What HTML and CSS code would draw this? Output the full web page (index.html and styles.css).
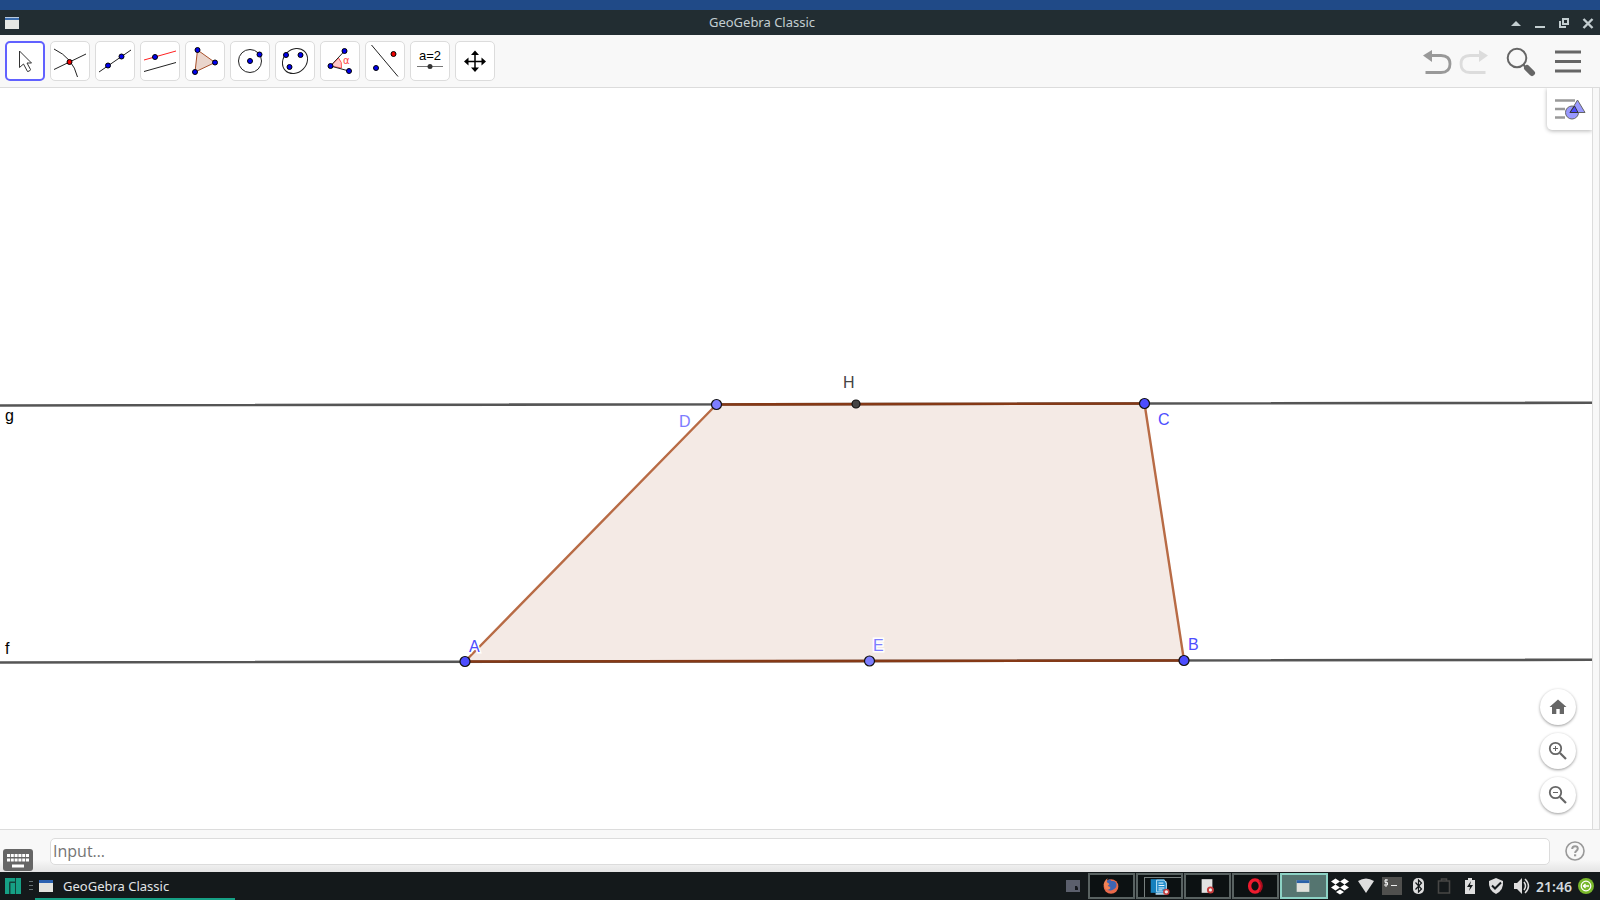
FILE: index.html
```html
<!DOCTYPE html>
<html lang="en">
<head>
<meta charset="utf-8">
<title>GeoGebra Classic</title>
<link rel="stylesheet" href="styles.css">
</head>
<body>
<div class="desktop-strip"></div>
<header class="titlebar">
  <svg class="app-icon" width="16" height="14" viewBox="0 0 16 14"><rect x="1" y="1" width="14" height="12" fill="#e6e8e4"/><rect x="1" y="1" width="14" height="3" fill="#3c6eb0"/><path d="M1 1.5h14" stroke="#b9cbe2"/></svg>
  <h1 class="title">GeoGebra Classic</h1>
  <div class="window-controls">
    <button class="win-btn" aria-label="Keep above"><svg width="24" height="24" viewBox="0 0 24 24"><path d="M7 15l5-5 5 5z" fill="#c3ced1"/></svg></button>
    <button class="win-btn" aria-label="Minimize"><svg width="24" height="24" viewBox="0 0 24 24"><path d="M7 16h10" stroke="#c3ced1" stroke-width="2"/></svg></button>
    <button class="win-btn" aria-label="Restore"><svg width="24" height="24" viewBox="0 0 24 24"><path d="M11 8h5v5h-5zM8 10v6h6" fill="none" stroke="#c3ced1" stroke-width="2"/></svg></button>
    <button class="win-btn" aria-label="Close"><svg width="24" height="24" viewBox="0 0 24 24"><path d="M7.500 8l9 9M16.500 8l-9 9" stroke="#c3ced1" stroke-width="2.400"/></svg></button>
  </div>
</header>

<nav class="toolbar">
  <div class="tools">
    <button class="tool tool-active" aria-label="Move"><svg viewBox="0 0 40 40"><path d="M14.500 10v16.500l4-3.500 4 7.500q2.500 0 3-2l-3.500-6.500h4.500z" fill="#fff" stroke="#333"/></svg></button>
    <button class="tool" aria-label="Intersect"><svg viewBox="0 0 40 40"><path d="M4 8q19 9 23.500 28M4 28.500L36 13" class="ink"/><circle cx="19.500" cy="21" r="2.500" class="pt-red"/></svg></button>
    <button class="tool" aria-label="Line"><svg viewBox="0 0 40 40"><path d="M4 31L36 9" class="ink"/><circle cx="13" cy="24.500" r="2.500" class="pt"/><circle cx="26.500" cy="15.500" r="2.500" class="pt"/></svg></button>
    <button class="tool" aria-label="Parallel line"><svg viewBox="0 0 40 40"><path d="M4 19L36 10" fill="none" stroke="#f22"/><path d="M4 30.500L36 21.500" class="ink"/><circle cx="15" cy="16" r="2.500" class="pt"/></svg></button>
    <button class="tool" aria-label="Polygon"><svg viewBox="0 0 40 40"><path d="M12.500 9L30 21.500 10 31z" fill="#ead5cc" stroke="#a8502a"/><circle cx="12.500" cy="9" r="2.500" class="pt"/><circle cx="30" cy="21.500" r="2.500" class="pt"/><circle cx="10" cy="31" r="2.500" class="pt"/></svg></button>
    <button class="tool" aria-label="Circle with center"><svg viewBox="0 0 40 40"><circle cx="20" cy="20" r="11.500" class="ink"/><circle cx="20" cy="20" r="2.500" class="pt"/><circle cx="29.500" cy="13.500" r="2.500" class="pt"/></svg></button>
    <button class="tool" aria-label="Ellipse"><svg viewBox="0 0 40 40"><ellipse cx="20" cy="20" rx="13.500" ry="11.500" transform="rotate(-45 20 20)" class="ink"/><circle cx="11" cy="14" r="2.500" class="pt"/><circle cx="25.500" cy="14" r="2.500" class="pt"/><circle cx="14.500" cy="26" r="2.500" class="pt"/></svg></button>
    <button class="tool" aria-label="Angle"><svg viewBox="0 0 40 40"><path d="M10.500 25l8-8q4 4 3 10z" fill="#ffc8c8" stroke="#f55"/><path d="M24.500 10l-14 15 18.500 5" class="ink"/><circle cx="24.500" cy="10" r="2.500" class="pt"/><circle cx="10.500" cy="25" r="2.500" class="pt"/><circle cx="29" cy="30" r="2.500" class="pt"/><text x="23" y="23" class="alpha">α</text></svg></button>
    <button class="tool" aria-label="Reflect about line"><svg viewBox="0 0 40 40"><path d="M6.500 4L33 35.500" class="ink"/><circle cx="11" cy="27" r="2.500" class="pt"/><circle cx="28.500" cy="13" r="2.500" class="pt-red"/></svg></button>
    <button class="tool" aria-label="Slider"><svg viewBox="0 0 40 40"><text x="20" y="19" class="slider-text">a=2</text><path d="M7 25.500h26" stroke="#777" stroke-width="1"/><circle cx="20" cy="25.500" r="2.500" fill="#333"/></svg></button>
    <button class="tool" aria-label="Move graphics view"><svg viewBox="0 0 40 40"><path d="M20 12v17M12 20.500h17" stroke="#000" stroke-width="1.500"/><path d="M20 9.500l4 4.500h-8zM20 31l4-4.500h-8zM9 20.500l4.500-4v8zM31 20.500l-4.500-4v8z"/></svg></button>
  </div>
  <div class="actions">
    <button class="action" aria-label="Undo"><svg width="36" height="40" viewBox="0 0 36 40"><path d="M8 14.500h13q9 0 9 8.500t-9 8.500H5.500" fill="none" stroke="#999" stroke-width="2.800"/><path d="M3 14.500L12 9v12z" fill="#999"/></svg></button>
    <button class="action" aria-label="Redo"><svg width="36" height="40" viewBox="0 0 36 40"><path d="M27 14.500H14q-9 0-9 8.500t9 8.500h15.500" fill="none" stroke="#dcdcdc" stroke-width="2.800"/><path d="M32 14.500L23 9v12z" fill="#dcdcdc"/></svg></button>
    <button class="action action-search" aria-label="Search"><svg width="32" height="40" viewBox="0 0 32 40"><circle cx="13" cy="17" r="9.300" fill="none" stroke="#666" stroke-width="2"/><path d="M19 23.500l3 3" stroke="#666" stroke-width="2"/><path d="M23 27l5 5" stroke="#666" stroke-width="6" stroke-linecap="round"/></svg></button>
    <button class="action action-menu" aria-label="Menu"><svg width="28" height="40" viewBox="0 0 28 40"><path d="M1 11h26M1 20.500h26M1 30h26" stroke="#666" stroke-width="3"/></svg></button>
  </div>
</nav>

<main class="workspace">
  <section class="graphics">
    <svg class="drawing" aria-label="Trapezoid ABCD">
      <path d="M465 573.500L1184 572.500 1144.500 315.500 716.500 316.500z" fill="#f4eae5"/>
      <path d="M0 317.500L3200 312M0 574.500L3200 569" class="line"/>
      <path d="M465 573.500L716.500 316.500M1144.500 315.500L1184 572.500" class="leg"/>
      <path d="M465 573.500L1184 572.500M716.500 316.500L1144.500 315.500" class="base"/>
      <g class="points">
        <circle cx="465" cy="573.500" r="5" fill="#4d4dff"/><circle cx="1184" cy="572.500" r="5" fill="#4d4dff"/>
        <circle cx="1144.500" cy="315.500" r="5" fill="#4d4dff"/><circle cx="716.500" cy="316.500" r="5" fill="#7d7dff"/>
        <circle cx="869.500" cy="573" r="5" fill="#7d7dff"/><circle cx="856" cy="316" r="4" fill="#444"/>
      </g>
      <g class="labels">
        <text x="5" y="333" fill="#000">g</text><text x="5" y="566" fill="#000">f</text>
        <text x="469" y="564" fill="#4d4dff">A</text><text x="1188" y="562" fill="#4d4dff">B</text>
        <text x="1158" y="337" fill="#4d4dff">C</text><text x="679" y="339" fill="#7d7dff">D</text>
        <text x="873" y="563" fill="#7d7dff">E</text><text x="843" y="300" fill="#444">H</text>
      </g>
    </svg>
    <button class="style-toggle" aria-label="Style bar"><svg width="45" height="42" viewBox="0 0 45 42"><path d="M8 12.500h20M8 21h10M8 29.500h10" stroke="#999" stroke-width="2.600"/><circle cx="25" cy="24.500" r="6.500" fill="#9999ff" stroke="#666"/><path d="M30.500 12l7.500 12.500H23z" fill="#9999ff" stroke="#666"/><path d="M27.500 18l3.500 6.500h-8z" fill="#4d4dff" stroke="#333"/></svg></button>
    <div class="zoom-controls">
      <button class="round" aria-label="Standard view"><svg width="24" height="24" viewBox="0 0 24 24"><path d="M10.300 19v-5h3.400v5h4.300v-7h2.500L12 4.500 3.500 12H6v7z" fill="#666"/></svg></button>
      <button class="round" aria-label="Zoom in"><svg width="24" height="24" viewBox="0 0 24 24"><circle cx="9.500" cy="9.500" r="5.700" class="lens"/><path d="M14 14l6 6" stroke="#666" stroke-width="2.200"/><path d="M9.500 7v5M7 9.500h5" stroke="#666"/></svg></button>
      <button class="round" aria-label="Zoom out"><svg width="24" height="24" viewBox="0 0 24 24"><circle cx="9.500" cy="9.500" r="5.700" class="lens"/><path d="M14 14l6 6" stroke="#666" stroke-width="2.200"/><path d="M7 9.500h5" stroke="#666"/></svg></button>
    </div>
  </section>
  <div class="gutter"></div>
</main>

<section class="inputbar">
  <button class="keyboard" aria-label="Show keyboard"><svg width="30" height="22" viewBox="0 0 30 22"><rect width="30" height="22" rx="3" fill="#666"/><path d="M4 6.500h22M4 11h22" stroke="#fff" stroke-width="3" stroke-dasharray="3 .8"/><path d="M9 17h12" stroke="#fff" stroke-width="3"/></svg></button>
  <input class="entry" type="text" placeholder="Input…" aria-label="Input">
  <button class="help" aria-label="Help"><svg width="20" height="20" viewBox="0 0 20 20"><circle cx="10" cy="10" r="9" fill="none" stroke="#999" stroke-width="1.600"/><path d="M7.200 8q0-2.800 2.900-2.800 2.700 0 2.700 2.400 0 1.300-1.400 2.300-1.200.8-1.200 2" fill="none" stroke="#999" stroke-width="2"/><path d="M9 13.300h2.200v2H9z" fill="#999"/></svg></button>
</section>

<footer class="taskbar">
  <button class="start" aria-label="Applications"><svg width="35" height="28" viewBox="0 0 35 28"><path d="M5 6h16v16H5z" fill="#16a085"/><path d="M9.500 22v-11.500h6M15.500 6v16M10 22V11M15.500 10h-6" fill="none" stroke="#12433b" stroke-width="1"/><path d="M29 9.500h4M29 13.500h4M29 17.500h4" stroke="#657174"/></svg></button>
  <button class="task"><svg width="16" height="14" viewBox="0 0 16 14"><rect x="1" y="1" width="14" height="12" fill="#e3e4df"/><path d="M1 2.500h14" stroke="#2b62b0" stroke-width="3"/></svg><span>GeoGebra Classic</span></button>
  <div class="tray">
    <svg class="note" width="14" height="12" viewBox="0 0 14 12"><path d="M0 0h14v12H0z" fill="#5b5f6c"/><path d="M9 6h2l1 2v2H9z" fill="#15181d"/></svg>
    <div class="windows">
      <button class="win" aria-label="Firefox"><svg viewBox="0 0 44 22"><circle cx="21.500" cy="11.500" r="7.500" fill="#e9694a"/><path d="M17 6l3-2 2 2q4-1 5 3t-4 6-6-2q3 1 4-1l-3-1z" fill="#3e65b4"/><path d="M14 10q0-4 4-7l-1 4 3 2-2 2 3 2q-2 3-5 1z" fill="#f18255"/></svg></button>
      <button class="win win-stacked" aria-label="Documents"><svg viewBox="0 0 44 22"><path d="M18 6h11v14H18z" fill="#a8cde2"/><path d="M13 4h14v14H13z" fill="#1680bd"/><path d="M19 5h8l2 3v9H19z" fill="#248dcb" stroke="#b8e2f8"/><path d="M21 8h5M21 10.500h6M21 13h6M21 15h4" stroke="#eef9ff"/><circle cx="29" cy="17" r="2.500" fill="#eee" stroke="#c83c3c" stroke-width="1.600"/></svg></button>
      <button class="win" aria-label="Document viewer"><svg viewBox="0 0 44 22"><path d="M16 4h11v14H16z" fill="#e2e2e2"/><circle cx="25" cy="15" r="2.600" fill="#eee" stroke="#c83c3c" stroke-width="2"/></svg></button>
      <button class="win" aria-label="Opera"><svg viewBox="0 0 44 22"><ellipse cx="21.500" cy="11" rx="5.500" ry="6.300" fill="none" stroke="#ee1b2e" stroke-width="3.500"/><path d="M26 5q5 6 0 12" fill="none" stroke="#a80d1d" stroke-width="2"/></svg></button>
      <button class="win win-current" aria-label="GeoGebra"><svg viewBox="0 0 44 22"><path d="M15 5h13v12H15z" fill="#e0e1dc"/><path d="M15 6.500h13" stroke="#2b62a8" stroke-width="3"/></svg></button>
    </div>
    <div class="status">
      <svg viewBox="0 0 26 28"><path d="M7.500 6.500l4.500 3-4.500 3-4.500-3zM16.500 6.500l4.500 3-4.500 3-4.500-3zM7.500 12.500l4.500 3-4.500 3-4.500-3zM16.500 12.500l4.500 3-4.500 3-4.500-3zM12 17.500l4 2.500-4 2.500L8 20z" fill="#fff"/></svg>
      <svg viewBox="0 0 26 28"><path d="M4 9q8-5 16 0l-8 12z" fill="#dedede"/></svg>
      <svg viewBox="0 0 26 28"><path d="M2 5h20v18H2z" fill="#50504e"/><path d="M8 8H5v2.500h2.500V13H4M6 7v8M11 13.500h6" fill="none" stroke="#eee"/></svg>
      <svg viewBox="0 0 26 28"><rect x="7" y="6" width="11" height="16" rx="5" fill="#dedede"/><path d="M9.500 10.500l6 6.500-3 3V8l3 3-6 6.500" fill="none" stroke="#14191b" stroke-width="1.200"/></svg>
      <svg viewBox="0 0 26 28"><path d="M6.500 9h11v12h-11zM9.500 9V7h5v2" fill="none" stroke="#474746" stroke-width="1.600"/></svg>
      <svg viewBox="0 0 26 28"><path d="M7 8h3V6h4v2h3v14H7z" fill="#dedede"/><path d="M13 9l-4 6h3l-1 4 4-6h-3z" fill="#14191b"/></svg>
      <svg viewBox="0 0 26 28"><path d="M12 6l7 3q1 9-7 13-8-4-7-13z" fill="#dedede"/><path d="M8 13.500l3 3 6-6" fill="none" stroke="#14191b" stroke-width="2"/></svg>
      <svg viewBox="0 0 26 28"><path d="M4 11h3l5-5v16l-5-5H4z" fill="#dedede"/><path d="M14 10q3 4 0 8M15 7q7 7 0 14" fill="none" stroke="#dedede" stroke-width="1.500"/></svg>
    </div>
    <time class="clock">21:46</time>
    <svg class="update" width="16" height="16" viewBox="0 0 16 16"><circle cx="8" cy="8" r="8" fill="#79b82b"/><circle cx="8" cy="8" r="4.800" fill="none" stroke="#fff" stroke-width="1.200"/><path d="M5 8h6M7.500 6L5.500 8l2 2" fill="none" stroke="#fff" stroke-width="1.300"/></svg>
  </div>
</footer>
</body>
</html>
```
FILE: styles.css
```css
* { box-sizing: border-box; }

body {
  display: flex;
  flex-direction: column;
  min-height: 100vh;
  margin: 0;
  background: #f8f8f8;
  font-family: "Noto Sans", "Open Sans", sans-serif;
  font-size: 13px;
}

button {
  padding: 0;
  border: 0;
  background: none;
  color: inherit;
  font: inherit;
}

svg { display: block; }

.desktop-strip { height: 10px; background: #204a87; }

.titlebar {
  display: flex;
  align-items: center;
  gap: 4px;
  height: 25px;
  padding-left: 4px;
  background: #222d32;
  color: #c3ced1;
}

.title {
  flex: 1;
  margin: 0;
  font-size: 13px;
  line-height: 25px;
  font-weight: 400;
  text-align: center;
}

.window-controls { display: flex; }

.win-btn { width: 24px; height: 24px; }

.toolbar {
  display: flex;
  align-items: flex-start;
  justify-content: space-between;
  height: 53px;
  padding: 6px 18px 0 5px;
  border-bottom: 1px solid #dcdcdc;
  background: #f8f8f8;
}

.tools { display: flex; gap: 5px; }

.tool {
  width: 40px;
  height: 40px;
  border: 1px solid #dcdcdc;
  border-radius: 5px;
  background: #fff;
}

.tool svg { width: 40px; height: 40px; margin: -1px; }

.tool-active { border: 2px solid #6161ff; }

.tool-active svg { margin: -2px; }

.ink { fill: none; stroke: #222; stroke-width: 1; }
.pt { fill: #0000ee; stroke: #000; }
.pt-red { fill: #ee0000; stroke: #000; }

.alpha { fill: #ff4444; font: 10px "DejaVu Sans", sans-serif; }

.slider-text {
  fill: #000;
  font: 13px "Liberation Sans", sans-serif;
  text-anchor: middle;
}

.actions { display: flex; }
.action-search { margin-left: 12px; }
.action-menu { margin-left: 18px; }

.workspace { display: flex; flex: 1; }

.graphics {
  position: relative;
  flex: 1;
  overflow: hidden;
  background: #fff;
}

.drawing { position: absolute; width: 100%; height: 100%; }

.line { fill: none; stroke: #555; stroke-width: 2.600; }
.leg { fill: none; stroke: #b86b45; stroke-width: 2.400; }
.base { fill: none; stroke: #853916; stroke-width: 2.600; }
.points circle { stroke: #111; stroke-width: 1.200; }

.labels text {
  font: 16px "Liberation Sans", Arial, sans-serif;
  stroke: #fff;
  stroke-width: 3px;
  paint-order: stroke;
}

.gutter {
  width: 8px;
  border: 1px solid #dcdcdc;
  border-width: 0 1px;
}

.style-toggle {
  position: absolute;
  top: 0;
  right: 0;
  border-bottom-left-radius: 5px;
  background: #fff;
  box-shadow: 0 1px 4px rgba(0, 0, 0, .3);
}

.zoom-controls {
  position: absolute;
  right: 16px;
  bottom: 16px;
  display: grid;
  gap: 8px;
}

.round {
  display: grid;
  place-items: center;
  width: 36px;
  height: 36px;
  border-radius: 50%;
  background: #fff;
  box-shadow: 0 1px 3px rgba(0, 0, 0, .4);
}

.lens { fill: none; stroke: #666; stroke-width: 1.800; }

.inputbar {
  display: flex;
  align-items: center;
  height: 43px;
  padding: 0 15px 0 3px;
  border-top: 1px solid #dcdcdc;
  background: linear-gradient(#f8f8f8 70%, #e4e4e4);
}

.keyboard { align-self: flex-end; padding-bottom: 1px; }

.entry {
  flex: 1;
  height: 27px;
  margin: 0 15px 0 17px;
  padding: 0 2px;
  border: 1px solid #dcdcdc;
  border-radius: 5px;
  background: #fff;
  font: 16px "Open Sans", sans-serif;
}

.entry::placeholder { color: #757575; opacity: 1; }

.taskbar {
  display: flex;
  height: 28px;
  background: #14191b;
  color: #e2e5e6;
}

.task {
  display: flex;
  align-items: center;
  gap: 9px;
  width: 200px;
  padding: 2px 0 0 3px;
  border-bottom: 2px solid #16a085;
}

.tray {
  display: flex;
  align-items: center;
  margin-left: auto;
  padding-right: 6px;
}

.note { margin-right: 8px; }

.windows { display: flex; gap: 1px; }

.win {
  width: 47px;
  height: 26px;
  border: 2px solid #596261;
  background: #0c1112;
}

.win svg { width: 43px; height: 22px; }

.win-stacked { box-shadow: inset 6px 2px #0c1112, inset 7px 3px #777f7e; }

.win-current { width: 48px; border-color: #8cd2c4; background: #557570; }

.status { display: flex; }
.status svg { width: 26px; height: 28px; }

.clock {
  width: 42px;
  color: #d3dadd;
  font-weight: 600;
  font-size: 14px;
}
```
